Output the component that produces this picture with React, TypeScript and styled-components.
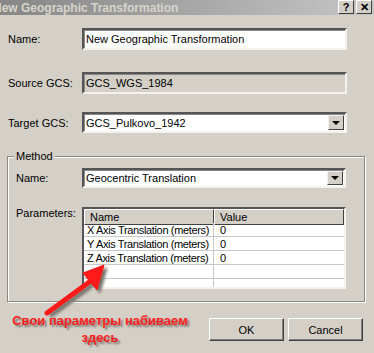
import styled, { createGlobalStyle } from "styled-components";

const GlobalStyle = createGlobalStyle`
  body {
    margin: 0;
    background: #d4d0c8;
    font-family: "Liberation Sans", Arial, sans-serif;
    font-size: 11px;
    color: #000;
  }
`;

const Window = styled.div`
  position: relative;
  width: 374px;
  height: 353px;
  overflow: hidden;
  background: #d4d0c8;
`;

const TitleBar = styled.div`
  height: 15px;
  display: flex;
  align-items: center;
  justify-content: space-between;
  padding-right: 2px;
  background: linear-gradient(to right, #868686, #c6c6c6);
`;

const TitleText = styled.div`
  margin-left: -7px;
  font-weight: bold;
  font-size: 12px;
  color: #d8d4cc;
  white-space: nowrap;
`;

const TitleButtons = styled.div`
  display: flex;
  gap: 2px;
  align-self: flex-start;
`;

const TitleButton = styled.div`
  width: 16px;
  height: 14px;
  box-sizing: border-box;
  display: flex;
  align-items: center;
  justify-content: center;
  background: #d4d0c8;
  border: 1px solid;
  border-color: #fff #404040 #404040 #fff;
  font-weight: bold;
  font-size: 11px;
  line-height: 1;
`;

const Body = styled.div`
  display: flex;
  flex-direction: column;
  padding: 13px 27px 0 8px;
`;

const Row = styled.div<{ $top?: number; $alignTop?: boolean }>`
  display: flex;
  align-items: ${({ $alignTop }) => ($alignTop ? "flex-start" : "center")};
  margin-top: ${({ $top }) => $top ?? 0}px;
`;

const Label = styled.div<{ $width: number }>`
  width: ${({ $width }) => $width}px;
  flex-shrink: 0;
`;

const Field = styled.div<{ $height: number; $disabled?: boolean }>`
  flex: 1;
  height: ${({ $height }) => $height}px;
  box-sizing: border-box;
  display: flex;
  align-items: center;
  padding-left: 2px;
  background: ${({ $disabled }) => ($disabled ? "#d4d0c8" : "#fff")};
  border: 2px solid;
  border-color: #555 #f4f2ee #f4f2ee #555;
  box-shadow: inset 1px 1px 0 #888;
`;

const FieldText = styled.span`
  flex: 1;
`;

const DropButton = styled.div`
  width: 16px;
  height: calc(100% - 2px);
  margin-right: 1px;
  box-sizing: border-box;
  display: flex;
  align-items: center;
  justify-content: center;
  background: #d4d0c8;
  border: 1px solid;
  border-color: #f4f2ee #404040 #404040 #f4f2ee;
  &::after {
    content: "";
    border-left: 4px solid transparent;
    border-right: 4px solid transparent;
    border-top: 4px solid #000;
  }
`;

const Group = styled.div`
  position: relative;
  margin: 23px -18px 0 -1px;
  padding: 11px 18px 12px 8px;
  border: 1px solid #8a8884;
  box-shadow: inset 1px 1px 0 #fff, 1px 1px 0 #fff;
`;

const Legend = styled.div`
  position: absolute;
  top: -7px;
  left: 6px;
  padding: 0 2px;
  background: #d4d0c8;
`;

const Grid = styled.div`
  flex: 1;
  height: 82px;
  box-sizing: border-box;
  overflow: hidden;
  background: #fff;
  border: 2px solid;
  border-color: #555 #f4f2ee #f4f2ee #555;
  display: grid;
  grid-template-columns: 130px 1fr;
  grid-auto-rows: 14px;
`;

const HeadCell = styled.div`
  height: 16px;
  box-sizing: border-box;
  padding-left: 5px;
  display: flex;
  align-items: center;
  background: #d4d0c8;
  border: 1px solid;
  border-color: #fff #404040 #404040 #fff;
`;

const Cell = styled.div<{ $first?: boolean }>`
  box-sizing: border-box;
  min-width: 0;
  overflow: hidden;
  display: flex;
  align-items: center;
  padding-left: ${({ $first }) => ($first ? 3 : 6)}px;
  border-bottom: 1px solid #c8c8c8;
  border-right: ${({ $first }) => ($first ? "1px solid #c8c8c8" : "none")};
  letter-spacing: -0.35px;
  white-space: nowrap;
`;

const Footer = styled.div`
  display: flex;
  align-items: flex-start;
  justify-content: space-between;
  margin: 16px -16px 0 0;
`;

const Note = styled.div`
  width: 184px;
  margin-top: -6px;
  text-align: center;
  color: #ff1e1e;
  font-weight: bold;
  font-size: 13px;
  line-height: 17px;
  white-space: nowrap;
  text-shadow: 2px 2px 2px #7a7670;
`;

const Buttons = styled.div`
  display: flex;
  gap: 4px;
`;

const Button = styled.button`
  width: 75px;
  height: 23px;
  box-sizing: border-box;
  background: #d4d0c8;
  border: 1px solid;
  border-color: #fff #404040 #404040 #fff;
  box-shadow: inset -1px -1px 0 #808080;
  font-family: "Liberation Sans", Arial, sans-serif;
  font-size: 11px;
  color: #000;
  padding: 0;
`;

const ArrowLayer = styled.svg`
  position: absolute;
  left: 0;
  top: 0;
  pointer-events: none;
`;

const rows = ["X", "Y", "Z"];

const App = () => {
  return (
    <Window>
      <GlobalStyle />
      <TitleBar>
        <TitleText>New Geographic Transformation</TitleText>
        <TitleButtons>
          <TitleButton>?</TitleButton>
          <TitleButton>✕</TitleButton>
        </TitleButtons>
      </TitleBar>
      <Body>
        <Row>
          <Label $width={74}>Name:</Label>
          <Field $height={22}>
            <FieldText>New Geographic Transformation</FieldText>
          </Field>
        </Row>
        <Row $top={22}>
          <Label $width={74}>Source GCS:</Label>
          <Field $height={22} $disabled>
            <FieldText>GCS_WGS_1984</FieldText>
          </Field>
        </Row>
        <Row $top={18}>
          <Label $width={74}>Target GCS:</Label>
          <Field $height={21}>
            <FieldText>GCS_Pulkovo_1942</FieldText>
            <DropButton />
          </Field>
        </Row>
        <Group>
          <Legend>Method</Legend>
          <Row>
            <Label $width={66}>Name:</Label>
            <Field $height={20}>
              <FieldText>Geocentric Translation</FieldText>
              <DropButton />
            </Field>
          </Row>
          <Row $top={19} $alignTop>
            <Label $width={66}>Parameters:</Label>
            <Grid>
              <HeadCell>Name</HeadCell>
              <HeadCell>Value</HeadCell>
              {rows.map((axis) => [
                <Cell key={axis + "n"} $first>
                  {axis} Axis Translation (meters)
                </Cell>,
                <Cell key={axis + "v"}>0</Cell>,
              ])}
              <Cell $first />
              <Cell />
              <Cell $first />
              <Cell />
            </Grid>
          </Row>
        </Group>
        <Footer>
          <Note>
            Свои параметры набиваем
            <br />
            здесь
          </Note>
          <Buttons>
            <Button>OK</Button>
            <Button>Cancel</Button>
          </Buttons>
        </Footer>
      </Body>
      <ArrowLayer width="374" height="353" viewBox="0 0 374 353">
        <defs>
          <filter id="shadow" x="-20%" y="-20%" width="140%" height="140%">
            <feGaussianBlur stdDeviation="1.5" />
          </filter>
        </defs>
        <g transform="translate(3 3)" fill="#77736c" stroke="#77736c" filter="url(#shadow)">
          <line x1="47" y1="313" x2="92" y2="280" strokeWidth="5" />
          <polygon points="104,265 83,273 97,290" />
        </g>
        <g fill="#ff1a1a" stroke="#ff1a1a">
          <line x1="47" y1="313" x2="92" y2="280" strokeWidth="5" strokeLinecap="round" />
          <polygon points="104,265 83,273 97,290" strokeWidth="1" />
        </g>
      </ArrowLayer>
    </Window>
  );
};

export default App;
